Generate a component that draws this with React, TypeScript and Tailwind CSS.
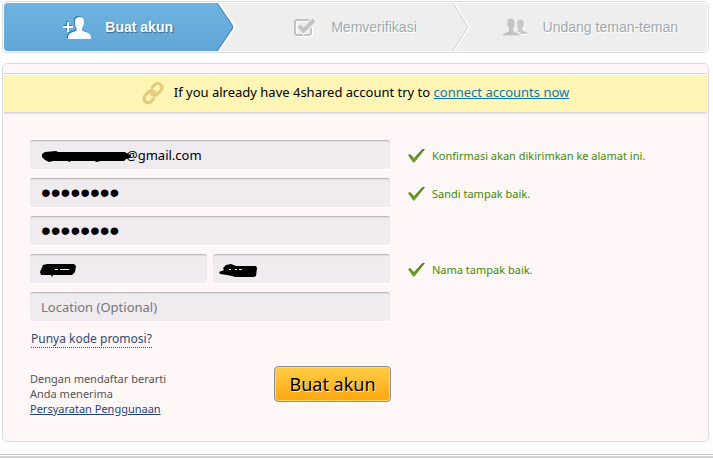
import { ReactNode, useState } from 'react';
import clsx from 'clsx';

interface StepProps {
    label: string;
    icon: ReactNode;
    active?: boolean;
    children?: ReactNode;
}

function Step({ label, icon, active, children }: StepProps) {
    return (
        <li
            className={clsx(
                'relative flex h-12 items-center justify-center pt-px text-[14px]',
                active
                    ? 'gap-[14px] rounded-l-sm bg-gradient-to-b from-[#70b3e0] to-[#60a6d6] pr-1.5 font-bold text-white [text-shadow:1px_1px_1px_#34658f]'
                    : 'gap-[15px] text-[#9dabb0] [text-shadow:1px_1px_0_#fff]'
            )}
        >
            {icon}
            <span>{label}</span>
            {children}
        </li>
    );
}

function AddUserIcon() {
    return (
        <svg width="28" height="24" viewBox="0 0 28 24" className="flex-none">
            <g fill="#2c7cab" transform="translate(-1 -1)">
                <path d="M4 6h2v4h4v2H6v4H4v-4H0v-2h4z" />
                <path d="M12 5c0-3 2-4 4.500-4S21 2 21 5c0 3-.5 5-2 7v2.500c2.500 1.500 8 2 8.500 6V23H5v-2.500c.5-4 6.500-4.500 8.500-6V12c-1.500-2-1.500-4-1.500-7z" />
            </g>
            <g fill="#f8fbff">
                <path d="M4 6h2v4h4v2H6v4H4v-4H0v-2h4z" />
                <path d="M12 5c0-3 2-4 4.500-4S21 2 21 5c0 3-.5 5-2 7v2.500c2.500 1.500 8.500 2 9 6V23H5v-2.500c.5-4 6.500-4.500 8.500-6V12c-1.500-2-1.500-4-1.500-7z" />
            </g>
        </svg>
    );
}

function VerifyIcon() {
    return (
        <svg width="22" height="19" viewBox="0 0 22 19" className="flex-none">
            <g fill="none" stroke="#fff" transform="translate(1 1)">
                <rect x="1" y="2" width="16" height="15" rx="2" strokeWidth="2" />
            </g>
            <rect x="1" y="2" width="16" height="15" rx="2" fill="none" stroke="#c3c3c3" strokeWidth="2" />
            <path d="M5 8l4.500 4.500L20 2" fill="none" stroke="#eee" strokeWidth="7" />
            <path d="M5 8l4.500 4.500L20 2" fill="none" stroke="#c3c3c3" strokeWidth="4" />
        </svg>
    );
}

function FriendsIcon() {
    return (
        <svg width="26" height="19" viewBox="0 0 26 19" className="flex-none">
            <path
                d="M16 6c0-3 1.500-4 3.500-4S23 3 23 6c0 2.500-.5 4-1.500 5.500V13c1.500 1.500 4.500 1.500 4.500 4h-6z"
                fill="#fff"
            />
            <path
                d="M15 5c0-2.500 1.500-3.500 3.500-3.500S22 2.500 22 5c0 2.500-.5 4-1.500 5.500V12c1.500 1.500 4.500 1.500 5 4h-6c-1-1.500-2.500-2-4-3l1-2c-1-1.500-1.500-3.500-1.500-6z"
                fill="#c8c8c8"
            />
            <path
                d="M5 4.500C5 1.500 6.500 0 9 0s4 1.500 4 4.500c0 3-.5 4.500-1.500 6V13c1.500 1.500 6.500 1.500 7 5H0c.5-3.500 5-3.500 6.500-5v-2.500C5.500 9 5 7.500 5 4.500z"
                fill="#c3c3c3"
                stroke="#eee"
            />
        </svg>
    );
}

function LinkIcon() {
    return (
        <svg width="22" height="24" viewBox="0 0 24 26" fill="none" className="flex-none">
            <g stroke="#e3cb80" strokeWidth="3.500" strokeLinecap="round" strokeLinejoin="round">
                <path d="M10 13.500c1.800 2.500 5 2.800 7 .6l3.300-3.600c1.900-2.200 1.900-4.800.1-6.700-1.900-1.900-4.700-1.900-6.600.2l-2.600 2.800" />
                <path d="M14 12.500c-1.800-2.500-5-2.800-7-.6l-3.300 3.600c-1.900 2.200-1.900 4.800-.1 6.700 1.900 1.900 4.700 1.900 6.600-.2l2.600-2.800" />
            </g>
        </svg>
    );
}

function CheckIcon() {
    return (
        <svg width="17" height="14" viewBox="0 0 17 14" className="flex-none">
            <defs>
                <linearGradient id="check" x1="0" y1="0" x2="0" y2="1">
                    <stop offset="0" stopColor="#4a7a1c" />
                    <stop offset="1" stopColor="#6fa82c" />
                </linearGradient>
            </defs>
            <path d="M0 6l2-1 4 4L14.500 0H17L6.500 13.500H5z" fill="url(#check)" />
        </svg>
    );
}

function Valid({ children }: { children: ReactNode }) {
    return (
        <p className="flex items-center gap-[7px] pt-[3px] text-[11px] text-[#408a05]">
            <CheckIcon />
            {children}
        </p>
    );
}

interface FieldProps {
    id: string;
    label: string;
    type?: string;
    initial?: string;
    placeholder?: string;
    className?: string;
    children?: ReactNode;
}

function Field({ id, label, type = 'text', initial = '', placeholder, className, children }: FieldProps) {
    const [value, setValue] = useState(initial);

    return (
        <div className="relative min-w-0 flex-1">
            <input
                id={id}
                type={type}
                aria-label={label}
                value={value}
                placeholder={placeholder}
                onChange={(e) => setValue(e.target.value)}
                className={clsx(
                    'block h-[29px] w-full rounded-[3px] border-t border-[#bdb9bd] bg-[#efebef] text-black shadow-[0_1px_0_#fff,inset_0_1px_1px_#dfdbe0] outline-none placeholder:text-[#777]',
                    className ?? 'px-[11px] text-[13px]'
                )}
            />
            {children}
        </div>
    );
}

export default function App() {
    return (
        <main className="bg-white font-['Noto_Sans','Open_Sans',sans-serif]">
            <div className="pt-px pr-1 pl-[2px]">
                <ol className="grid grid-cols-3 rounded-[5px] border border-[#dcdcdc] bg-[#eee] p-px font-['Liberation_Sans',Arial,sans-serif] shadow-[inset_0_0_0_1px_#fff]">
                    <Step label="Buat akun" icon={<AddUserIcon />} active>
                        <svg width="22" height="48" viewBox="0 0 22 48" className="absolute top-0 right-0">
                            <path d="M2 0l15 22v4L2 48h20V0z" fill="#eee" />
                            <path d="M3 0l15 22q1 2 0 4L3 48" fill="none" stroke="#fff" strokeWidth="2" />
                            <path d="M1 0l15 22q1 2 0 4L1 48" fill="none" stroke="#3f80b3" strokeWidth="1" />
                        </svg>
                    </Step>
                    <Step label="Memverifikasi" icon={<VerifyIcon />}>
                        <svg width="22" height="48" viewBox="0 0 22 48" fill="none" className="absolute top-0 right-0">
                            <path d="M3 0l15 24L3 48" stroke="#fff" strokeWidth="2" />
                            <path d="M2 0l15 24L2 48" stroke="#d0d0d0" />
                        </svg>
                    </Step>
                    <Step label="Undang teman-teman" icon={<FriendsIcon />} />
                </ol>

                <section className="mt-[10px] rounded-[5px] border border-[#dcdcde] bg-[#fff7f7] px-px pt-[9px] pb-[25px]">
                    <div className="flex h-10 items-center justify-center gap-[10px] border-y border-[#d6d3d8] bg-[#fff5b5] text-[13px] text-black shadow-[inset_0_1px_0_#fff,0_1px_2px_#e8e0e4]">
                        <LinkIcon />
                        <p>
                            If you already have 4shared account try to{' '}
                            <a href="#connect" className="text-[#0877b5] underline">connect accounts now</a>
                        </p>
                    </div>

                    <form className="px-[26px] pt-[27px]" onSubmit={(e) => e.preventDefault()}>
                        <div className="grid grid-cols-[360px_1fr] items-center gap-x-[18px] gap-y-[9px]">
                            <Field id="email" label="Email" initial="@gmail.com" className="pr-[11px] pl-[96px] text-[13px]">
                                <svg width="90" height="14" viewBox="0 0 90 14" className="pointer-events-none absolute top-[10px] left-[11px]">
                                    <path d="M1 4L4 2l11-1 2 1h67l3 2 3 1-1 3-4 1-2 2H60l-5 1-1-1H30l-2 1-1-1H12l-4 1-4-2-3-3z" />
                                </svg>
                            </Field>
                            <Valid>Konfirmasi akan dikirimkan ke alamat ini.</Valid>

                            <Field id="password" label="Sandi" type="password" initial="12345678" className="px-[11px] font-['Liberation_Sans',sans-serif] text-[28px] leading-none" />
                            <Valid>Sandi tampak baik.</Valid>

                            <Field id="confirm" label="Ulangi sandi" type="password" initial="12345678" className="px-[11px] font-['Liberation_Sans',sans-serif] text-[28px] leading-none" />
                            <span />

                            <div className="flex gap-[6px]">
                                <Field id="first_name" label="Nama depan">
                                    <svg width="37" height="14" viewBox="0 0 37 14" className="pointer-events-none absolute top-[9px] left-[10px]">
                                        <path d="M3 2l4-1h27l2 2-1 6-3 3H13l-1 2-1-2H1L0 9z" />
                                        <path d="M15 6.500h3m2 0h9" stroke="#fff" />
                                    </svg>
                                </Field>
                                <Field id="last_name" label="Nama belakang">
                                    <svg width="38" height="14" viewBox="0 0 38 14" className="pointer-events-none absolute top-[10px] left-[6px]">
                                        <path d="M7 1l5-1 5 2h20l1 2-1 8-2 1H16l-3-1-5-1-7-1-1-2 5-2-1-2z" />
                                        <path d="M10 5.500h2m4 0h2m2 0h3" stroke="#fff" />
                                    </svg>
                                </Field>
                            </div>
                            <Valid>Nama tampak baik.</Valid>

                            <Field id="location" label="Location" placeholder="Location (Optional)" />
                        </div>

                        <a href="#promo" className="mt-[10px] ml-px inline-block border-b border-dotted border-[#2c4a75] text-[12px] leading-4 text-[#2c4a75]">
                            Punya kode promosi?
                        </a>

                        <div className="mt-[17px] flex w-[361px] items-start justify-between">
                            <p className="mt-[5px] text-[11px] leading-[15px] text-[#555]">
                                Dengan mendaftar berarti
                                <br />
                                Anda menerima
                                <br />
                                <a href="#terms" className="text-[#21457b] underline">Persyaratan Penggunaan</a>
                            </p>
                            <button
                                type="submit"
                                className="h-9 w-[117px] rounded-[4px] border border-[#8a8f96] bg-gradient-to-b from-[#ffcd42] to-[#ffa50a] text-[18px] text-black shadow-[inset_0_0_0_1px_#ffd968] [text-shadow:1px_1px_0_#ffe9a8]"
                            >
                                Buat akun
                            </button>
                        </div>
                    </form>
                </section>
            </div>

            <footer className="mt-3 h-1 border-t border-b-2 border-t-[#ccc] border-b-[#d6d2ce]" />
        </main>
    );
}
